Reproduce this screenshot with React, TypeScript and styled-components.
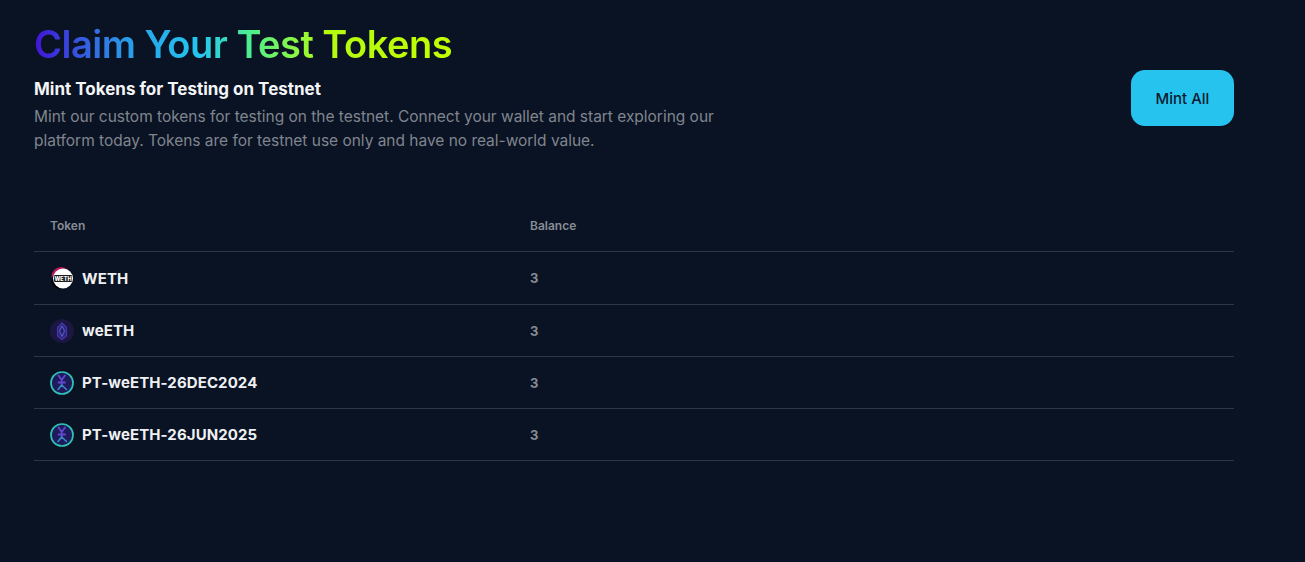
// App.tsx
import React from "react";
import styled, { createGlobalStyle } from "styled-components";

const GlobalStyle = createGlobalStyle`
  html, body {
    margin: 0;
    padding: 0;
    background-color: #0a1323;
    font-family: Inter, "Noto Sans", "Liberation Sans", sans-serif;
  }
`;

const Page = styled.div`
  width: 1305px;
  height: 562px;
  box-sizing: border-box;
  padding: 20px 71px 0 34px;
  overflow: hidden;
  background-color: #0a1323;
`;

const Header = styled.header`
  display: flex;
  justify-content: space-between;
  align-items: flex-start;
  height: 133px;
`;

const Intro = styled.div`
  width: 700px;
`;

const Title = styled.h1`
  display: inline-block;
  margin: -1px 0 0;
  font-size: 38px;
  line-height: 50px;
  font-weight: 600;
  letter-spacing: -0.5px;
  background: linear-gradient(90deg, #4213d8 0%, #2a9be8 22%, #22c8ef 40%, #4fef8c 52%, #b4fb10 70%, #c2ff00 100%);
  -webkit-background-clip: text;
  background-clip: text;
  color: transparent;
`;

const Subtitle = styled.h2`
  margin: 8px 0 0;
  font-size: 17px;
  line-height: 24px;
  font-weight: 700;
  color: #f4f5f7;
`;

const Description = styled.p`
  margin: 4px 0 0;
  font-size: 15.5px;
  line-height: 24px;
  letter-spacing: -0.02px;
  color: #80858f;
`;

const MintButton = styled.button`
  width: 103px;
  height: 56px;
  margin-top: 50px;
  border: none;
  border-radius: 14px;
  background-color: #27c3ef;
  color: #0b1a30;
  font-family: inherit;
  font-size: 15px;
  font-weight: 500;
`;

const Table = styled.div`
  margin-top: 47px;
`;

const Row = styled.div<{ $height: number }>`
  display: grid;
  grid-template-columns: 480px 1fr;
  align-items: center;
  height: ${(p) => p.$height}px;
  padding-left: 16px;
  box-sizing: border-box;
  border-bottom: 1px solid #2e3644;
`;

const HeadCell = styled.div`
  font-size: 12px;
  font-weight: 600;
  color: #878c95;
`;

const TokenCell = styled.div`
  display: flex;
  align-items: center;
  gap: 8px;
`;

const TokenName = styled.span`
  padding-top: 1px;
  font-size: 15px;
  line-height: 18px;
  font-weight: 700;
  letter-spacing: 0.1px;
  color: #eef0f3;
`;

const BalanceCell = styled.div`
  font-size: 13px;
  font-weight: 700;
  color: #878c95;
`;

const IconFrame = styled.svg`
  display: block;
  width: 24px;
  height: 24px;
  flex: none;
`;

const WethIcon = () => (
  <IconFrame viewBox="0 0 24 24">
    <circle cx="11" cy="10.5" r="9.5" fill="#b5175a" />
    <circle cx="10" cy="14.5" r="8.5" fill="#000" />
    <circle cx="13" cy="12.5" r="10" fill="#fff" />
    <rect x="4" y="9" width="18" height="7" rx="1" fill="#1c1c1c" />
    <text x="13" y="14.6" textAnchor="middle" fontSize="5.5" fontWeight="800" fill="#fff" fontFamily="Inter, sans-serif">
      WETH
    </text>
  </IconFrame>
);

const WeethIcon = () => (
  <IconFrame viewBox="0 0 24 24">
    <circle cx="12" cy="12" r="12" fill="#1b1642" />
    <path d="M12 4 L16.5 8.5 V17 L12 20.5 L7.5 17 V8.5 Z" fill="#2d2480" stroke="#4538a8" strokeWidth="1.2" />
    <path d="M12 7 L14.5 12 L12 17.5 L9.5 12 Z" fill="#241c66" stroke="#5f63cc" strokeWidth="1" />
  </IconFrame>
);

const PendleIcon = () => (
  <IconFrame viewBox="0 0 24 24">
    <circle cx="12" cy="12" r="11" fill="#1f1a5a" stroke="#2fc3b8" strokeWidth="1.7" />
    <path d="M8.5 4.5 L11.7 9 L15 4.5 M8.5 11.5 H15 M11.7 9 V14" fill="none" stroke="#6048d0" strokeWidth="1.8" strokeLinecap="round" />
    <path d="M11.7 14 L8 18.5 M11.7 14 L16.5 18.5" fill="none" stroke="#3a88c4" strokeWidth="1.6" strokeLinecap="round" />
  </IconFrame>
);

const tokens: { name: string; icon: React.ReactNode; height: number }[] = [
  { name: "WETH", icon: <WethIcon />, height: 53 },
  { name: "weETH", icon: <WeethIcon />, height: 52 },
  { name: "PT-weETH-26DEC2024", icon: <PendleIcon />, height: 52 },
  { name: "PT-weETH-26JUN2025", icon: <PendleIcon />, height: 52 },
];

const App: React.FC = () => {
  return (
    <Page>
      <GlobalStyle />
      <Header>
        <Intro>
          <Title>Claim Your Test Tokens</Title>
          <Subtitle>Mint Tokens for Testing on Testnet</Subtitle>
          <Description>
            Mint our custom tokens for testing on the testnet. Connect your wallet and start exploring our platform
            today. Tokens are for testnet use only and have no real-world value.
          </Description>
        </Intro>
        <MintButton>Mint All</MintButton>
      </Header>
      <Table>
        <Row $height={52}>
          <HeadCell>Token</HeadCell>
          <HeadCell>Balance</HeadCell>
        </Row>
        {tokens.map((t) => (
          <Row key={t.name} $height={t.height}>
            <TokenCell>
              {t.icon}
              <TokenName>{t.name}</TokenName>
            </TokenCell>
            <BalanceCell>3</BalanceCell>
          </Row>
        ))}
      </Table>
    </Page>
  );
};

export default App;
